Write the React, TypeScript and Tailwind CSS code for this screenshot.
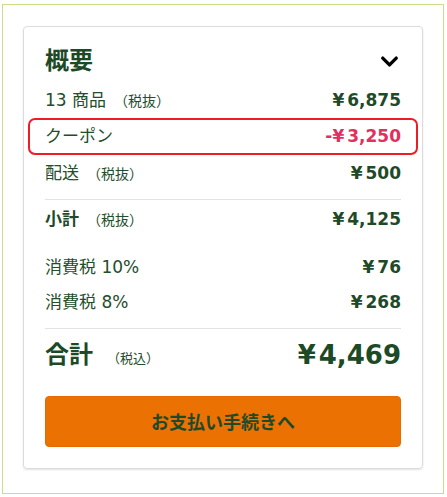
import { ChevronDown } from "lucide-react";

const font = {
  fontFamily: '"DejaVu Sans", "Noto Sans CJK JP", sans-serif',
};

type Row = {
  label: string;
  note?: string;
  value: string;
};

function Price({ value, className }: { value: string; className?: string }) {
  // yen sign sits a little apart from the digits
  const idx = value.indexOf("¥");
  return (
    <div className={className}>
      {value.slice(0, idx)}
      <span className="mr-[3px]">¥</span>
      {value.slice(idx + 1)}
    </div>
  );
}

function Line({ label, note, value }: Row) {
  return (
    <div className="flex items-center justify-between h-[35px]">
      <div className="text-[17px] text-[#234d2c]">
        {label}
        {note && <span className="ml-[8px] text-[14px]">{note}</span>}
      </div>
      <Price value={value} className="text-[17px] font-bold text-[#1f4a29]" />
    </div>
  );
}

export default function App() {
  return (
    <div className="bg-white w-[447px] h-[497px] pt-[4px] pl-[2px]" style={font}>
      <div className="w-[442px] h-[490px] border border-[#c6df88] pt-[21px] pl-[20px]">
        <div className="w-[400px] h-[443px] border border-[#dcdcdc] rounded-[4px] shadow-[0_1px_2px_rgba(0,0,0,0.12)] px-[21px] pt-[17px]">
          <div className="flex items-center justify-between h-[34px]">
            <h2 className="text-[24px] font-bold text-[#1c4a27]">概要</h2>
            <ChevronDown size={27} strokeWidth={3} className="text-black mr-[-2px]" />
          </div>

          <div className="mt-[5px]">
            <Line label="13 商品" note="（税抜）" value="¥6,875" />
          </div>

          <div className="flex items-center justify-between h-[37px] mx-[-17px] px-[15px] border-2 border-[#ee1c25] rounded-[7px]">
            <div className="text-[17px] text-[#234d2c]">クーポン</div>
            <Price value="-¥3,250" className="text-[17px] font-bold text-[#e0305f]" />
          </div>

          <div className="pt-[1px]">
            <Line label="配送" note="（税抜）" value="¥500" />
          </div>

          <div className="border-t border-[#e2e2e2] mt-[8px]" />

          <div className="flex items-center justify-between h-[40px]">
            <div className="text-[17px] font-bold text-[#1f4a29]">
              小計<span className="ml-[8px] text-[14px] font-normal text-[#234d2c]">（税抜）</span>
            </div>
            <Price value="¥4,125" className="text-[17px] font-bold text-[#1f4a29]" />
          </div>

          <div className="mt-[10px]">
            <Line label="消費税 10%" value="¥76" />
            <Line label="消費税 8%" value="¥268" />
          </div>

          <div className="border-t border-[#e2e2e2] mt-[8px]" />

          <div className="flex items-center justify-between h-[52px]">
            <div className="text-[24px] font-bold text-[#1c4a27]">
              合計<span className="ml-[14px] text-[13px] font-normal text-[#234d2c]">（税込）</span>
            </div>
            <Price value="¥4,469" className="text-[26px] font-bold text-[#1c4a27]" />
          </div>

          <button
            type="button"
            className="mt-[15px] w-full h-[51px] rounded-[4px] bg-[#ec7103] border border-[#e56a00] text-[18px] font-bold text-[#1f4a29]"
            style={{ fontFamily: '"Noto Sans CJK JP", sans-serif' }}
          >
            お支払い手続きへ
          </button>
        </div>
      </div>
    </div>
  );
}
